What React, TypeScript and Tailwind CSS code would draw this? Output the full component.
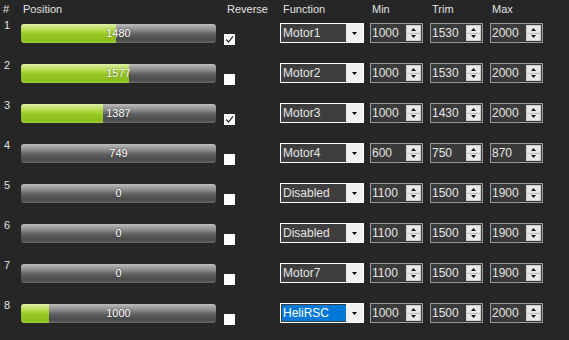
import React from "react";

type Servo = {
  id: number;
  value: number;
  reverse: boolean;
  fn: string;
  min: number;
  trim: number;
  max: number;
  selected?: boolean;
};

const servos: Servo[] = [
  { id: 1, value: 1480, reverse: true, fn: "Motor1", min: 1000, trim: 1530, max: 2000 },
  { id: 2, value: 1577, reverse: false, fn: "Motor2", min: 1000, trim: 1530, max: 2000 },
  { id: 3, value: 1387, reverse: true, fn: "Motor3", min: 1000, trim: 1430, max: 2000 },
  { id: 4, value: 749, reverse: false, fn: "Motor4", min: 600, trim: 750, max: 870 },
  { id: 5, value: 0, reverse: false, fn: "Disabled", min: 1100, trim: 1500, max: 1900 },
  { id: 6, value: 0, reverse: false, fn: "Disabled", min: 1100, trim: 1500, max: 1900 },
  { id: 7, value: 0, reverse: false, fn: "Motor7", min: 1100, trim: 1500, max: 1900 },
  { id: 8, value: 1000, reverse: false, fn: "HeliRSC", min: 1000, trim: 1500, max: 2000, selected: true },
];

// bar scale used by the position column
const BAR_MIN = 800;
const BAR_MAX = 2200;

function PositionBar({ value }: { value: number }) {
  const pct = Math.max(0, Math.min(1, (value - BAR_MIN) / (BAR_MAX - BAR_MIN))) * 100;
  return (
    <div className="relative mt-[5px] flex h-[19px] w-[195px] overflow-hidden rounded-[3px] bg-[linear-gradient(to_bottom,#bcbcbc_0%,#8e8e8e_30%,#5e5e5e_55%,#4a4a4a_85%,#6c6c6c_100%)]">
      {pct > 0 && (
        <div
          className="h-full rounded-l-[3px] bg-[linear-gradient(to_bottom,#dcefa8_0%,#b6dc52_30%,#98c824_55%,#8cbd1c_85%,#a3cf3c_100%)]"
          style={{ width: `${pct}%` }}
        />
      )}
      <span className="absolute inset-0 flex items-center justify-center text-[11px] text-white [text-shadow:0_0_2px_rgba(0,0,0,0.6)]">
        {value}
      </span>
    </div>
  );
}

function CheckBox({ checked }: { checked: boolean }) {
  return (
    <div className="ml-[8px] mt-[15px] flex h-[11px] w-[11px] items-center justify-center bg-white">
      {checked && (
        <svg width="9" height="9" viewBox="0 0 9 9">
          <path d="M1 4.5 L3.5 7 L8 1.5" fill="none" stroke="#333" strokeWidth="1.2" />
        </svg>
      )}
    </div>
  );
}

function Combo({ text, selected }: { text: string; selected?: boolean }) {
  return (
    <div className="ml-[45px] mt-[4px] flex h-[20px] w-[84px] border border-white bg-[#3e3e3e]">
      <div className="flex flex-1 items-center pl-[1px]">
        <span
          className={`flex h-[16px] flex-1 items-center pl-[1px] text-[12px] ${
            selected ? "bg-[#0078d7] text-white" : "text-[#e6e6e6]"
          }`}
        >
          {text}
        </span>
      </div>
      <div className="flex w-[17px] items-center justify-center bg-[#f0f0f0]">
        <svg width="5" height="3" viewBox="0 0 5 3">
          <path d="M0 0 H5 L2.5 3 Z" fill="#000" />
        </svg>
      </div>
    </div>
  );
}

function Numeric({ value, gap }: { value: number; gap: string }) {
  return (
    <div className={`${gap} mt-[4px] flex h-[20px] w-[53px] border border-[#9a9a9a] bg-[#3a3a3a]`}>
      <span className="flex flex-1 items-center pl-[1px] text-[12px] text-[#e6e6e6]">{value}</span>
      <div className="my-[1px] mr-[1px] flex w-[15px] flex-col border border-[#cfcfcf] bg-[#e8e8e8]">
        <div className="flex flex-1 items-center justify-center border-b border-[#bdbdbd]">
          <svg width="5" height="3" viewBox="0 0 5 3">
            <path d="M0 3 H5 L2.5 0 Z" fill="#111" />
          </svg>
        </div>
        <div className="flex flex-1 items-center justify-center">
          <svg width="5" height="3" viewBox="0 0 5 3">
            <path d="M0 0 H5 L2.5 3 Z" fill="#111" />
          </svg>
        </div>
      </div>
    </div>
  );
}

export default function App() {
  return (
    <div className="h-[340px] w-[569px] overflow-hidden bg-[#262626] font-['Liberation_Sans',Arial,sans-serif] text-[#e2e2e2]">
      {/* Header */}
      <div className="flex h-[19px] pt-[1px] text-[11px]">
        <div className="w-[21px] pl-[3px]">#</div>
        <div className="w-[195px] pl-[2px]">Position</div>
        <div className="w-[64px] pl-[11px]">Reverse</div>
        <div className="w-[90px] pl-[3px]">Function</div>
        <div className="w-[60px] pl-[2px]">Min</div>
        <div className="w-[60px] pl-[2px]">Trim</div>
        <div className="pl-[2px]">Max</div>
      </div>

      {servos.map((s) => (
        <div key={s.id} className="flex h-[40px] items-start">
          <div className="w-[21px] pl-[4px] text-[11px] leading-[13px]">{s.id}</div>
          <PositionBar value={s.value} />
          <CheckBox checked={s.reverse} />
          <Combo text={s.fn} selected={s.selected} />
          <Numeric value={s.min} gap="ml-[6px]" />
          <Numeric value={s.trim} gap="ml-[7px]" />
          <Numeric value={s.max} gap="ml-[7px]" />
        </div>
      ))}
    </div>
  );
}
